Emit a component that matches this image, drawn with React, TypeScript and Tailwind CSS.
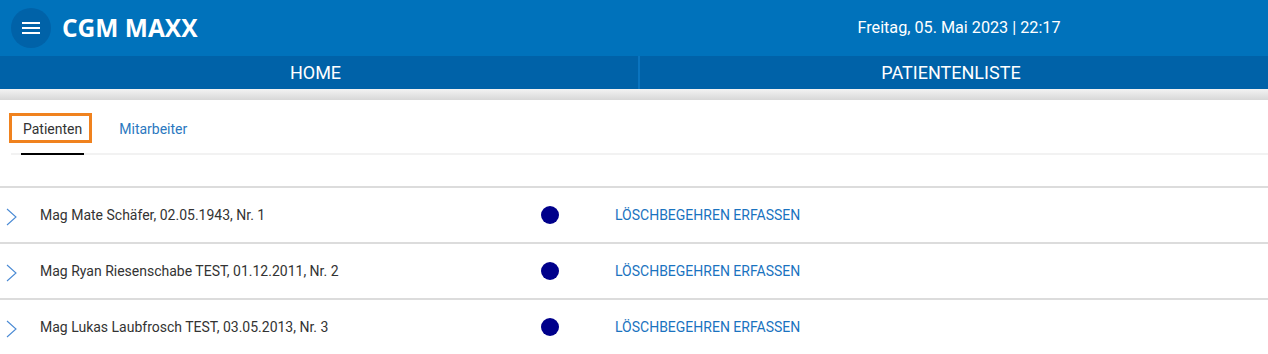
import React from "react";

const rows = [
  "Mag Mate Schäfer, 02.05.1943, Nr. 1",
  "Mag Ryan Riesenschabe TEST, 01.12.2011, Nr. 2",
  "Mag Lukas Laubfrosch TEST, 03.05.2013, Nr. 3",
];

export default function App() {
  return (
    <div className="w-[1268px] h-[354px] overflow-hidden bg-white" style={{ fontFamily: "Roboto, 'Liberation Sans', sans-serif" }}>
      <header className="h-[56px] bg-[#0072bb] flex items-center">
        <div className="w-[634px] flex items-center">
          <button className="ml-[11px] w-[40px] h-[40px] rounded-full bg-[#0062a8] flex flex-col items-center justify-center gap-[3px]">
            <span className="block w-[18px] h-[2px] bg-white" />
            <span className="block w-[18px] h-[2px] bg-white" />
            <span className="block w-[18px] h-[2px] bg-white" />
          </button>
          <span className="ml-[11px] text-white font-bold text-[24.5px] leading-none" style={{ fontFamily: "'Open Sans', sans-serif" }}>
            CGM MAXX
          </span>
        </div>
        <div className="flex-1 flex justify-center text-white text-[16.2px]">
          <span className="ml-[16px]">Freitag, 05. Mai 2023 | 22:17</span>
        </div>
      </header>
      <nav className="h-[33px] bg-[#0062a8] flex text-white text-[18px]">
        <div className="w-[638px] pr-[7px] flex items-center justify-center">HOME</div>
        <div className="w-[2px] bg-[#0a74bf]" />
        <div className="flex-1 pr-[6px] flex items-center justify-center">PATIENTENLISTE</div>
      </nav>
      <div className="h-[11px] bg-gradient-to-b from-[#f3f3f3] to-[#d8d8d8]" />
      <div className="pl-[11px] pt-[19px]">
        <div className="flex items-end border-b-2 border-[#f2f2f2]">
          <div className="relative mb-[-2px] ml-[10px] pb-[14px] border-b-2 border-black">
            <div className="absolute left-[-12px] right-[-8px] top-[-6px] bottom-[10px] border-[3px] border-[#f0821e]" />
            <div className="px-[2px] text-[14px] text-[#333] leading-[20px]">Patienten</div>
          </div>
          <div className="ml-[35px] pb-[14px] text-[14px] text-[#2b78c0] leading-[20px]">Mitarbeiter</div>
        </div>
      </div>
      <div className="mt-[31px]">
        {rows.map((r) => (
          <div key={r} className="h-[56px] border-t-2 border-[#dcdcdc] flex items-center">
            <svg className="ml-[6px] mt-[4px] w-[11px] h-[18px]" viewBox="0 0 11 18" fill="none">
              <path d="M1 1 L10 9 L1 17" stroke="#4a8ad4" strokeWidth="1.1" />
            </svg>
            <span className="ml-[23px] w-[501px] text-[14px] text-[#333]">{r}</span>
            <span className="w-[18px] h-[18px] rounded-full bg-[#00008b]" />
            <span className="ml-[56px] text-[14px] text-[#1a73c0]">LÖSCHBEGEHREN ERFASSEN</span>
          </div>
        ))}
      </div>
    </div>
  );
}
